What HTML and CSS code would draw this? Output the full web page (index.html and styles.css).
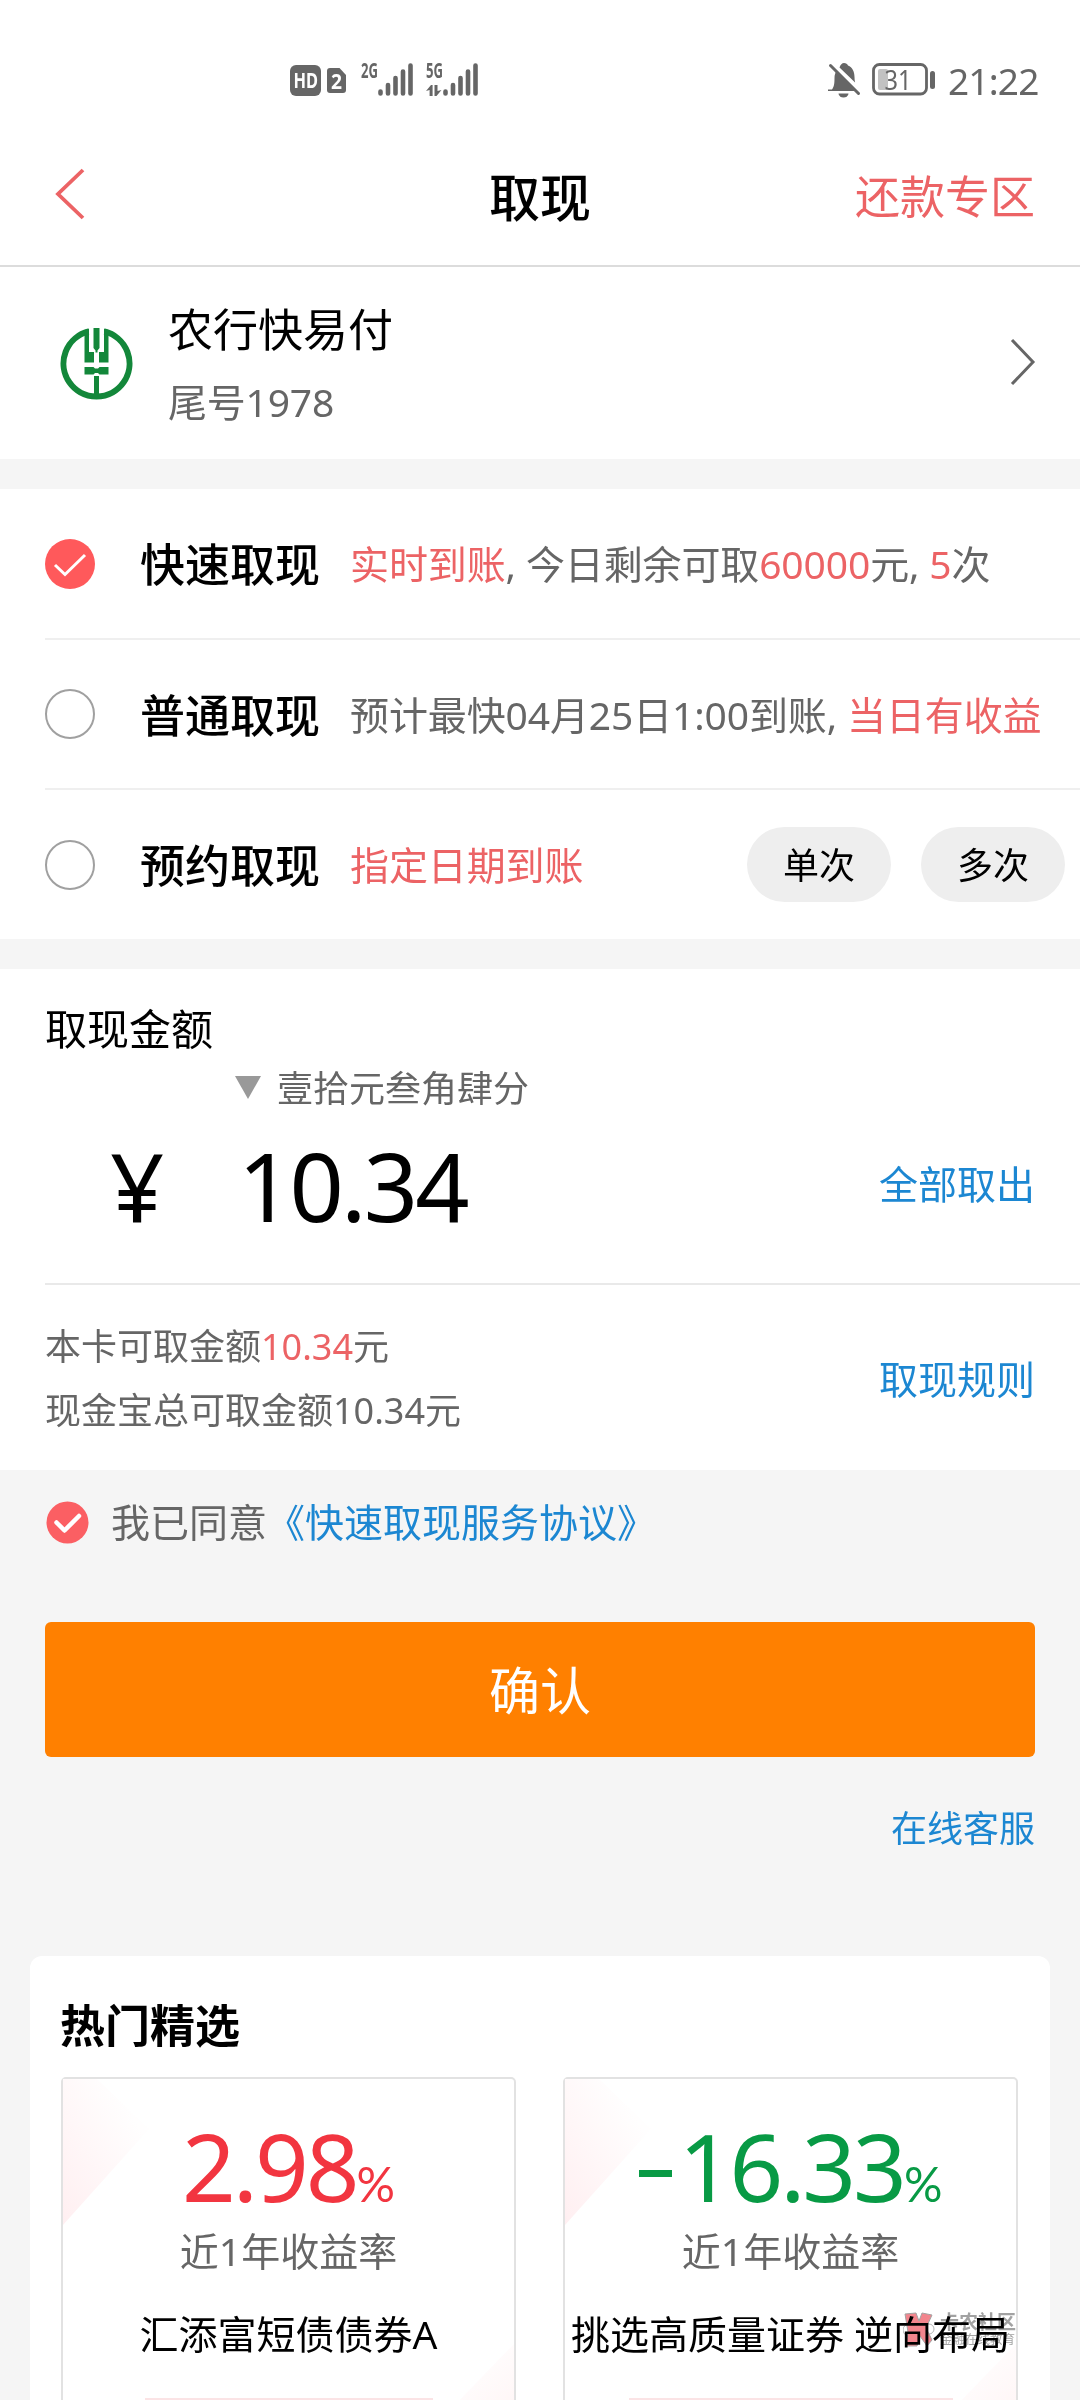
FILE: index.html
```html
<!DOCTYPE html>
<html lang="zh-CN">
<head>
<meta charset="utf-8">
<title>取现</title>
<link rel="stylesheet" href="styles.css">
</head>
<body>
<div class="screen">
  <div class="status">
    <svg class="status-net" width="190" height="50" viewBox="0 -10 190 50" fill="#666">
      <rect x="0" y="5" width="31" height="31" rx="6"/>
      <text x="3.5" y="27.5" class="hd" textLength="24.5" lengthAdjust="spacingAndGlyphs">HD</text>
      <path d="M40 8h9.500l6.500 7v15a3 3 0 0 1-3 3H40a3 3 0 0 1-3-3V11a3 3 0 0 1 3-3z"/>
      <text x="41" y="28.500" class="sim" textLength="11" lengthAdjust="spacingAndGlyphs">2</text>
      <text x="71" y="17.800" class="gen" textLength="17" lengthAdjust="spacingAndGlyphs">2G</text>
      <text x="136" y="17.800" class="gen" textLength="17" lengthAdjust="spacingAndGlyphs">5G</text>
      <g stroke="#666" stroke-width="4.600" stroke-linecap="round">
        <path d="M90.500 31.500v2M98 25v8.500M105.500 18v15.500M113 11.500v22M120.500 5.500v28"/>
        <path d="M155.500 31.500v2M163 25v8.500M170.500 18v15.500M178 11.500v22M185.500 5.500v28"/>
      </g>
      <path d="M136 31l5-6h1.600v11h-3v-6zM144.500 25h3v6l4-1-5 6h-2z"/>
    </svg>
    <div class="status-right">
      <svg width="110" height="40" viewBox="0 0 110 40" fill="#666">
        <path d="M4 29.500c2-3 2.500-5.500 2.500-11.500 0-3 .8-5.500 2.300-7.500L27.500 29.500v1.500H0v-1.500z"/>
        <path d="M11.500 7.500C12.500 4.500 14 3 16 3s3.500 1.200 4 2.500c4.500 2 6.500 6 6.500 11.500 0 2 .2 4 .6 5.500z"/>
        <path d="M10.500 33.500h10a5 4 0 0 1-10 0z"/>
        <path d="M2.500 5.500L30.500 33.500" stroke="#666" stroke-width="3" stroke-linecap="round"/>
        <rect x="45.500" y="4.500" width="53" height="29.500" rx="6" fill="none" stroke="#666" stroke-width="2.800"/>
        <rect x="50" y="9" width="10" height="21" rx="2" fill="#c2c2c2"/>
        <text x="56.500" y="29.500" class="batt" textLength="27" lengthAdjust="spacingAndGlyphs">31</text>
        <rect x="102" y="11" width="5" height="18" rx="2.500"/>
      </svg>
      <span class="time">21:22</span>
    </div>
  </div>

  <header class="nav">
    <svg class="back" width="32" height="52" viewBox="0 0 32 52"><path d="M29 2L4 26l25 24"/></svg>
    <h1 class="nav-title">取现</h1>
    <span class="nav-action">还款专区</span>
  </header>

  <section class="bank">
    <svg class="bank-logo" width="74" height="74" viewBox="0 0 74 74" fill="#13873a">
      <path d="M28.500 5.500A33 33 0 1 0 44.500 5.500" fill="none" stroke="#13873a" stroke-width="6"/>
      <path d="M24.500 4l4.500-1.500V26h5v10.500h-9.500zM48.500 4L44 2.500V26h-5v10.500h9.500zM33.500 2h6v20l-2 2.500v2h-2v-2l-2-2.500zM24.500 41h9l1.500 1.500h3l1.500-1.500h9v7.500h-9l-1.500-1.500h-3l-1.500 1.500h-9zM34 50h5v20h-5z"/>
    </svg>
    <div class="bank-info">
      <div class="bank-name">农行快易付</div>
      <div class="bank-tail">尾号1978</div>
    </div>
    <svg class="go" width="28" height="48" viewBox="0 0 28 48"><path d="M3 2l21 22L3 46"/></svg>
  </section>

  <section class="options">
    <div class="option">
      <svg class="radio" width="50" height="50" viewBox="0 0 50 50"><circle cx="25" cy="25" r="25" fill="#ff595b"/><path d="M10 26l10 9.500L40 16" fill="none" stroke="#fff" stroke-width="3"/></svg>
      <span class="option-name">快速取现</span>
      <span class="option-desc"><em>实时到账</em>, 今日剩余可取<em>60000</em>元, <em>5</em>次</span>
    </div>
    <div class="option">
      <span class="radio empty"></span>
      <span class="option-name">普通取现</span>
      <span class="option-desc">预计最快04月25日1:00到账, <em>当日有收益</em></span>
    </div>
    <div class="option">
      <span class="radio empty"></span>
      <span class="option-name">预约取现</span>
      <span class="option-desc"><em>指定日期到账</em></span>
      <div class="pills"><span class="pill">单次</span><span class="pill">多次</span></div>
    </div>
  </section>

  <section class="amount">
    <div class="amount-input">
      <div class="amount-label">取现金额</div>
      <div class="amount-words"><span class="triangle"></span>壹拾元叁角肆分</div>
      <div class="amount-row">
        <span class="yen">¥</span>
        <span class="value">10.34</span>
        <span class="link">全部取出</span>
      </div>
    </div>
    <div class="limits">
      <div class="limit-lines">
        <div>本卡可取金额<em>10.34</em>元</div>
        <div>现金宝总可取金额10.34元</div>
      </div>
      <span class="link">取现规则</span>
    </div>
  </section>

  <div class="agree">
    <svg width="43" height="43" viewBox="0 0 43 43"><circle cx="21.500" cy="21.500" r="21" fill="#fb5f63"/><path d="M10.500 21.500l8 8L33 15" fill="none" stroke="#fff" stroke-width="4.500" stroke-linecap="round" stroke-linejoin="round"/></svg>
    <span class="agree-text">我已同意</span><span class="agree-link">《快速取现服务协议》</span>
  </div>
  <button class="confirm">确认</button>
  <div class="service">在线客服</div>

  <section class="hot">
    <h2 class="hot-title">热门精选</h2>
    <div class="funds">
      <article class="fund">
        <svg class="tint" width="451" height="400" viewBox="0 0 451 400">
          <defs>
            <linearGradient id="tint" x1="0" y1="1" x2=".75" y2=".2"><stop offset="0" stop-color="#ffeff1"/><stop offset="1" stop-color="#fffefe"/></linearGradient>
            <linearGradient id="tint-end" x1="1" y1="1" x2=".4" y2=".3"><stop offset="0" stop-color="#fff0f1"/><stop offset="1" stop-color="#fffefe"/></linearGradient>
          </defs>
          <path d="M0 0H34L86 50L0 146z" fill="url(#tint)"/><path d="M451 265V400H320z" fill="url(#tint-end)"/>
        </svg>
        <div class="rate up">2.98<small>%</small></div>
        <div class="period">近1年收益率</div>
        <div class="fund-name">汇添富短债债券A</div>
        <div class="fund-more"></div>
      </article>
      <article class="fund">
        <svg class="tint" width="451" height="400" viewBox="0 0 451 400">
          <path d="M0 0H34L86 50L0 146z" fill="url(#tint)"/><path d="M451 265V400H320z" fill="url(#tint-end)"/>
        </svg>
        <div class="rate down"><i class="minus"></i>16.33<small>%</small></div>
        <div class="period">近1年收益率</div>
        <div class="fund-name">挑选高质量证券 逆向布局</div>
        <div class="fund-more wide"></div>
      </article>
    </div>
  </section>

  <div class="watermark">
    <svg width="32" height="36" viewBox="0 0 32 36"><circle cx="6" cy="18" r="6" fill="none" stroke="#777"/><circle cx="26" cy="17" r="5" fill="none" stroke="#777"/><path d="M2 2l11-1 3 8 3-8 10 2-6 13 6 12-5 6-7-10-3 10H3l2-14z" fill="#e8202f" stroke="#555"/></svg>
    <div class="watermark-text"><b>卡农社区</b><span>金融在线教育</span></div>
  </div>
</div>
</body>
</html>
```
FILE: styles.css
```css
* { box-sizing: border-box; }
body {
  margin: 0;
  background: #f5f5f5;
  color: #000;
  font-family: "Noto Sans", "Noto Sans CJK SC", sans-serif;
  font-size: 39px;
  line-height: 1.4;
}
em { font-style: normal; color: #ec6365; }
h1, h2 { margin: 0; font-weight: 500; }
svg { display: block; flex: none; }
.screen {
  position: relative;
  width: 1080px;
  height: 2400px;
  overflow: hidden;
  white-space: nowrap;
}

.status {
  display: flex;
  justify-content: space-between;
  height: 128px;
  padding: 50px 42px 0 290px;
  background: #fff;
}
.status-right { display: flex; gap: 10px; padding-top: 10px; }
.time { font-size: 37px; line-height: 42px; color: #666; width: 90px; letter-spacing: -.8px; }
.hd { fill: #fff; font-size: 21px; font-weight: 700; }
.sim { fill: #fff; font-size: 22px; font-weight: 700; }
.gen { font-size: 20.5px; font-weight: 700; }
.batt { font-size: 28px; }

.nav {
  display: grid;
  grid-template-columns: 1fr auto 1fr;
  align-items: center;
  height: 139px;
  padding: 0 45px;
  background: #fff;
  border-bottom: 2px solid #dcdcdc;
}
.back { fill: none; stroke: #ec6365; stroke-width: 3.8; margin: 0 0 5px 9px; }
.nav-title { font-size: 51px; line-height: 60px; }
.nav-action { justify-self: end; font-size: 45px; line-height: 60px; color: #ec6365; }

.bank {
  display: flex;
  align-items: center;
  height: 192px;
  padding: 0 43px 0 60px;
  background: #fff;
}
.bank-info { flex: 1; margin-left: 34px; padding-top: 5px; }
.bank-name { font-size: 45px; line-height: 72px; }
.bank-tail { line-height: 72px; color: #666; letter-spacing: -.2px; }
.go { fill: none; stroke: #666; stroke-width: 3; margin-bottom: 2px; }

.options { margin-top: 30px; padding-left: 45px; background: #fff; }
.option {
  display: flex;
  align-items: center;
  height: 150px;
  padding-right: 15px;
  border-bottom: 2px solid #efefef;
}
.option:first-child { height: 151px; }
.option:last-child { height: 149px; border-bottom: 0; }
.radio { flex: none; width: 50px; height: 50px; }
.empty { border: 2px solid #a0a0a0; border-radius: 50%; }
.option-name { font-size: 45px; font-weight: 500; margin-left: 45px; width: 210px; padding-top: 2px; }
.option-desc { color: #666; letter-spacing: -.12px; padding-top: 2px; }
.pills { display: flex; gap: 30px; margin-left: auto; }
.pill {
  width: 144px;
  height: 75px;
  border-radius: 38px;
  background: #eee;
  font-size: 36px;
  line-height: 77px;
  text-align: center;
}

.amount { margin-top: 30px; padding-left: 45px; background: #fff; }
.amount-input { height: 316px; padding-top: 30px; border-bottom: 2px solid #e9e9e9; }
.amount-label { font-size: 42px; line-height: 60px; }
.amount-words {
  display: flex;
  align-items: center;
  gap: 16px;
  padding-left: 190px;
  font-size: 36px;
  line-height: 60px;
  color: #666;
}
.triangle {
  border: 13px solid transparent;
  border-top: 23px solid #999;
  border-bottom: 0;
  margin-bottom: 4px;
}
.amount-row { display: flex; align-items: center; height: 132px; padding-right: 45px; }
.yen { width: 133px; padding-left: 65px; font-size: 95px; line-height: 132px; }
.value { margin-left: 60px; font-size: 95px; line-height: 132px; letter-spacing: -2.8px; }
.link { margin-left: auto; color: #1c87d2; }
.amount-row .link { padding-bottom: 2px; }
.limits { display: flex; align-items: center; height: 185px; padding: 3px 45px 0 0; }
.limit-lines { font-size: 36px; line-height: 64px; color: #666; }

.agree { display: flex; align-items: center; height: 105px; padding: 0 0 1px 46px; }
.agree-text { margin-left: 22px; color: #666; }
.agree-link { margin-left: -1px; color: #1c87d2; }
.confirm {
  display: block;
  width: 990px;
  height: 135px;
  margin: 47px 45px 0;
  padding: 2px 0 0;
  border: 0;
  border-radius: 6px;
  background: #ff8000;
  color: #fff;
  font: 51px/133px "Noto Sans", "Noto Sans CJK SC", sans-serif;
}
.service { height: 199px; padding: 42px 45px 0; font-size: 36px; line-height: 60px; text-align: right; color: #1c87d2; }

.hot { height: 500px; margin: 0 30px; padding: 35px 31px 0 31px; border-radius: 12px; background: #fff; }
.hot-title { font-size: 45px; font-weight: 700; line-height: 70px; margin-left: -1px; }
.funds { display: grid; grid-template-columns: 455px 455px; gap: 47px; margin-top: 16px; }
.fund {
  position: relative;
  height: 400px;
  border: 2px solid #e2e2e2;
  border-radius: 5px;
  text-align: center;
}
.tint { position: absolute; left: 0; top: 0; z-index: -1; }
.fund, .hot { isolation: isolate; }
.rate { height: 142px; padding-top: 21px; font-size: 94px; line-height: 132px; letter-spacing: -3px; }
.rate small { font-family: Lato, sans-serif; font-size: 48px; line-height: 1; letter-spacing: 0; }
.up { color: #f23540; }
.down { color: #089a45; }
.minus { display: inline-block; width: 33px; height: 7px; margin: 0 7px 25px 0; background: currentColor; vertical-align: baseline; }
.period { line-height: 60px; color: #666; }
.fund-name { margin-top: 23px; line-height: 60px; }
.fund-more { width: 288px; height: 20px; margin: 34px auto 0; background: #fbe3e5; }
.wide { width: 324px; }

.watermark { position: absolute; left: 903px; top: 2312px; display: flex; gap: 5px; opacity: .55; mix-blend-mode: multiply; }
.watermark-text { color: #555; line-height: 18px; }
.watermark-text b { display: block; font-size: 19px; line-height: 20px; }
.watermark-text span { display: block; font-size: 12.5px; line-height: 16px; }
```
